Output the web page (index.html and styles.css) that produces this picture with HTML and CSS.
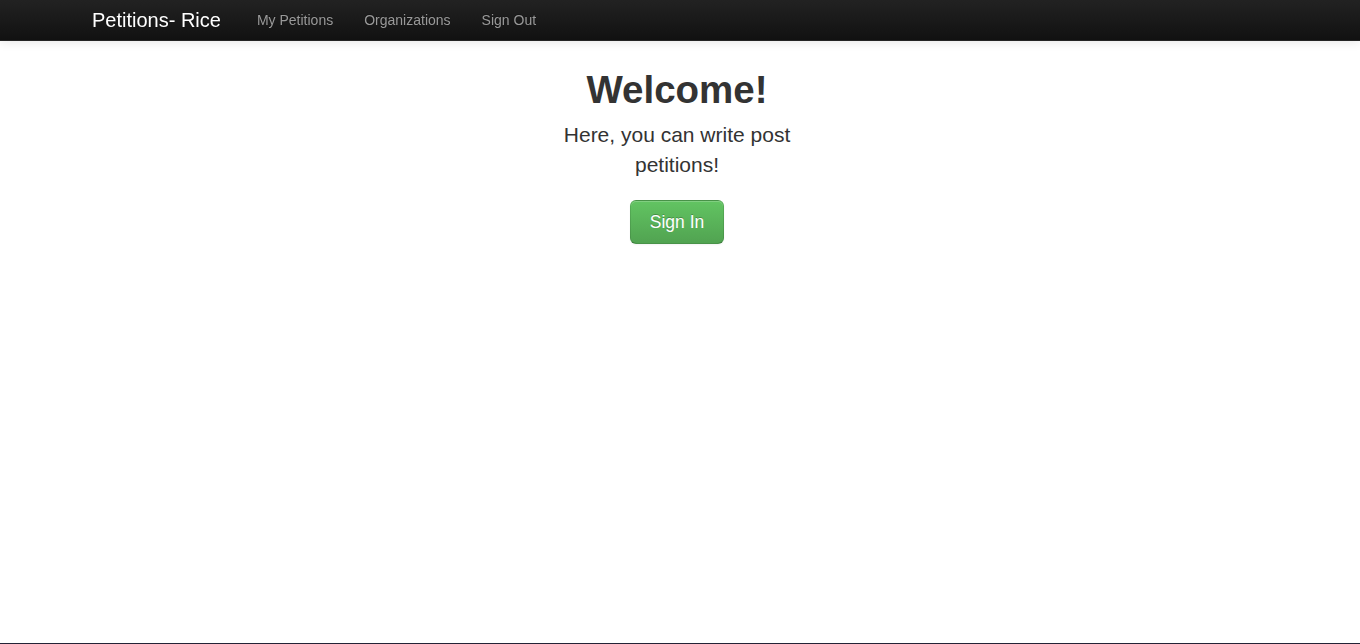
FILE: index.html
```html
<!DOCTYPE html>
<html lang="en">
<head>
<meta charset="utf-8">
<title>Petitions- Rice</title>
<link rel="stylesheet" href="styles.css">
</head>
<body>
<header class="navbar">
  <div class="navbar-inner">
    <div class="nav-container">
      <a class="brand" href="#">Petitions- Rice</a>
      <nav class="nav">
        <a href="#">My Petitions</a>
        <a href="#">Organizations</a>
        <a href="#">Sign Out</a>
      </nav>
    </div>
  </div>
</header>
<main class="page">
  <section class="hero">
    <h1 class="title">Welcome!</h1>
    <p class="lead">Here, you can write post petitions!</p>
    <a class="btn btn-success" href="#">Sign In</a>
  </section>
</main>
</body>
</html>
```

FILE: styles.css
```css
* { box-sizing: border-box; }

html, body {
  margin: 0;
  background: #ffffff;
}

body {
  font-family: "Liberation Sans", Arial, Helvetica, sans-serif;
  font-size: 14px;
  line-height: 20px;
  color: #333333;
  padding-top: 60px;
  min-height: 644px;
  border-bottom: 1px solid #232336;
}

a { text-decoration: none; }

.navbar {
  position: fixed;
  top: 0;
  left: 0;
  right: 0;
  z-index: 10;
}

.navbar-inner {
  height: 41px;
  background-color: #1b1b1b;
  background-image: linear-gradient(to bottom, #222222, #111111);
  border-bottom: 1px solid #252525;
  box-shadow: 0 1px 10px rgba(0, 0, 0, 0.1);
}

.nav-container {
  display: flex;
  align-items: center;
  height: 40px;
  padding-left: 72px;
}

.brand {
  display: block;
  padding: 10px 20px 10px 20px;
  font-size: 20px;
  line-height: 20px;
  font-weight: 200;
  color: #ffffff;
}

.nav {
  display: flex;
  margin-left: 0.5px;
}

.nav a {
  display: block;
  padding: 10px 15.5px;
  font-size: 14px;
  line-height: 20px;
  color: #999999;
  text-shadow: 0 -1px 0 rgba(0, 0, 0, 0.25);
}

.page {
  display: flex;
  justify-content: center;
  padding-right: 6px;
}

.hero {
  width: 270px;
  text-align: center;
}

.title {
  margin: 10px 0;
  font-size: 38.5px;
  line-height: 40px;
  font-weight: bold;
  color: #333333;
}

.lead {
  margin: 0 0 20px;
  font-size: 21px;
  line-height: 30px;
  font-weight: 200;
}

.btn {
  display: inline-block;
  padding: 11px 19px;
  font-size: 17.5px;
  line-height: 20px;
  border-radius: 6px;
  border: 1px solid;
}

.btn-success {
  color: #ffffff;
  text-shadow: 0 -1px 0 rgba(0, 0, 0, 0.25);
  background-color: #5bb75b;
  background-image: linear-gradient(to bottom, #62c462, #51a351);
  border-color: rgba(0, 0, 0, 0.1) rgba(0, 0, 0, 0.1) rgba(0, 0, 0, 0.25);
  box-shadow: inset 0 1px 0 rgba(255, 255, 255, 0.2), 0 1px 2px rgba(0, 0, 0, 0.05);
}
```
